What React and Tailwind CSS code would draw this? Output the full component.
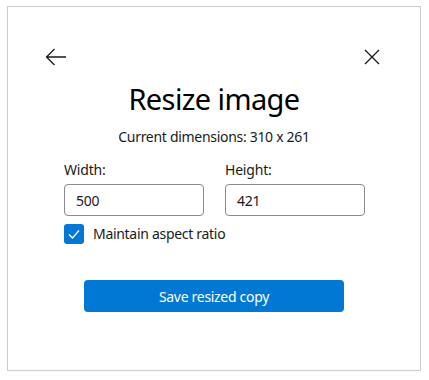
export default function App() {
  return (
    <div className="w-[429px] h-[380px] bg-white pt-[6px] pl-[7px]" style={{ fontFamily: '"Segoe UI", "Noto Sans", sans-serif' }}>
      <div className="w-[414px] h-[365px] border border-[#cccccc] flex flex-col">
        <div className="flex justify-between items-center pl-[37px] pr-[40px] pt-[39px] h-[61px]">
          <svg width="22" height="18" viewBox="0 0 22 18" fill="none" stroke="#1a1a1a" strokeWidth="1.3">
            <path d="M21 9H1.5M9.5 1L1.5 9l8 8" />
          </svg>
          <svg width="16" height="16" viewBox="0 0 16 16" fill="none" stroke="#1a1a1a" strokeWidth="1.3">
            <path d="M1 1l14 14M15 1L1 15" />
          </svg>
        </div>
        <h1 className="text-center text-[29px] leading-[38px] tracking-[-0.6px] text-black mt-[12px]">Resize image</h1>
        <p className="text-center text-[14px] leading-[20px] tracking-[-0.3px] text-[#1a1a1a] mt-[9px]">Current dimensions: 310 x 261</p>
        <div className="flex gap-[21px] pl-[56px] mt-[13px] tracking-[-0.2px]">
          <div className="flex flex-col">
            <label className="text-[14px] leading-[20px] text-[#1a1a1a]">Width:</label>
            <div className="mt-[4px] w-[140px] h-[32px] border border-[#8a8a8a] rounded-[4px] flex items-center px-[11px] text-[14px] text-[#1a1a1a]">500</div>
          </div>
          <div className="flex flex-col">
            <label className="text-[14px] leading-[20px] text-[#1a1a1a]">Height:</label>
            <div className="mt-[4px] w-[140px] h-[32px] border border-[#8a8a8a] rounded-[4px] flex items-center px-[11px] text-[14px] text-[#1a1a1a]">421</div>
          </div>
        </div>
        <div className="flex items-center pl-[56px] mt-[8px] gap-[9px]">
          <div className="w-[20px] h-[20px] rounded-[3px] bg-[#0078d4] flex items-center justify-center">
            <svg width="12" height="10" viewBox="0 0 12 10" fill="none" stroke="white" strokeWidth="1.3">
              <path d="M1 5.5l3.5 3.5L11 1.5" />
            </svg>
          </div>
          <span className="text-[14px] leading-[20px] tracking-[-0.3px] text-[#1a1a1a]">Maintain aspect ratio</span>
        </div>
        <div className="flex pl-[76px] mt-[36px]">
          <button className="w-[260px] h-[32px] rounded-[4px] bg-[#0078d4] text-white text-[14px] tracking-[-0.3px]">Save resized copy</button>
        </div>
      </div>
    </div>
  );
}
